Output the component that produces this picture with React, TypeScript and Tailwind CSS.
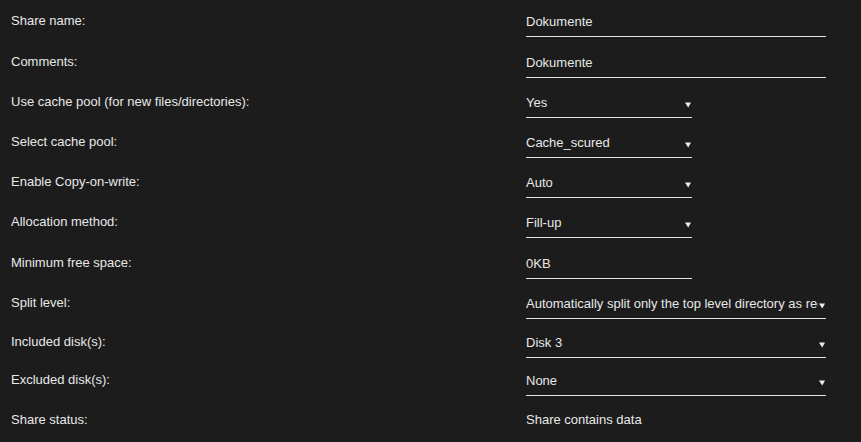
import React from "react";

type Row = {
  label: string;
  value: string;
  kind: "input" | "select" | "text";
  wide?: boolean;
  h: string;
};

const rows: Row[] = [
  { label: "Share name:", value: "Dokumente", kind: "input", wide: true, h: "h-[41px]" },
  { label: "Comments:", value: "Dokumente", kind: "input", wide: true, h: "h-[40px]" },
  { label: "Use cache pool (for new files/directories):", value: "Yes", kind: "select", h: "h-[40px]" },
  { label: "Select cache pool:", value: "Cache_scured", kind: "select", h: "h-[40px]" },
  { label: "Enable Copy-on-write:", value: "Auto", kind: "select", h: "h-[40px]" },
  { label: "Allocation method:", value: "Fill-up", kind: "select", h: "h-[41px]" },
  { label: "Minimum free space:", value: "0KB", kind: "input", h: "h-[40px]" },
  { label: "Split level:", value: "Automatically split only the top level directory as required", kind: "select", wide: true, h: "h-[39px]" },
  { label: "Included disk(s):", value: "Disk 3", kind: "select", wide: true, h: "h-[38px]" },
  { label: "Excluded disk(s):", value: "None", kind: "select", wide: true, h: "h-[40px]" },
  { label: "Share status:", value: "Share contains data", kind: "text", h: "h-[40px]" },
];

function Arrow() {
  return (
    <svg width="6" height="6" viewBox="0 0 6 6" className="absolute right-[1px] top-[14px]">
      <polygon points="0,0.5 6,0.5 3.2,5.5" fill="#ececec" />
    </svg>
  );
}

export default function App() {
  return (
    <div
      className="w-[861px] h-[442px] bg-[#1c1c1c] text-[#e8e8e8] text-[13px] overflow-hidden"
      style={{ fontFamily: '"Liberation Sans", Arial, sans-serif' }}
    >
      <div className="flex flex-col pt-[7px]">
        {rows.map((r, i) => (
          <div key={i} className={`flex items-start ${r.h}`}>
            <div className="w-[526px] pl-[11px] pt-[6px] leading-[16px] shrink-0">{r.label}</div>
            {r.kind === "text" ? (
              <div className="pt-[6px] leading-[16px]">{r.value}</div>
            ) : (
              <div
                className={`relative ${r.wide ? "w-[300px]" : "w-[166px]"} h-[30px] pt-[7px] pb-[6px] border-b border-[#e4e4e4] leading-[16px]`}
              >
                <div className={`overflow-hidden whitespace-nowrap ${r.kind === "select" ? "mr-[8px]" : ""}`}>
                  {r.value}
                </div>
                {r.kind === "select" && <Arrow />}
              </div>
            )}
          </div>
        ))}
      </div>
    </div>
  );
}
